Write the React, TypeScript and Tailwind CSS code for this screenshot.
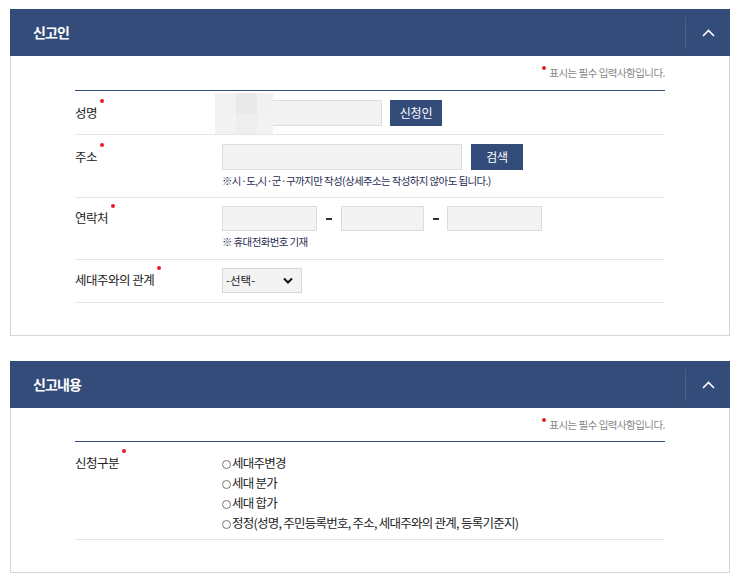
import React from 'react';

const NAVY = 'bg-[#344c79]';

const Dot = () => (
  <span className="absolute -right-[7px] -top-[4px] h-[4px] w-[4px] rounded-full bg-[#ee1c25]" />
);

const Label = ({ text }: { text: string }) => (
  <div className="w-[147px] shrink-0 text-[12.5px] tracking-[-0.04em] text-[#222]">
    <span className="relative">
      {text}
      <Dot />
    </span>
  </div>
);

const Header = ({ title }: { title: string }) => (
  <div className={`flex h-[47px] items-center ${NAVY}`}>
    <h2 className="flex-1 pl-[23px] text-[14px] font-bold tracking-[-0.06em] text-white">{title}</h2>
    <div className="h-[32px] w-px bg-[#4b5f88]" />
    <button className="flex h-full w-[44px] items-center justify-center">
      <svg width="13" height="8" viewBox="0 0 13 8" fill="none">
        <path d="M1 7 L6.5 1.5 L12 7" stroke="white" strokeWidth="1.6" />
      </svg>
    </button>
  </div>
);

const Required = ({ h = 'h-[34px]' }: { h?: string }) => (
  <div className={`flex ${h} items-center justify-end`}>
    <span className="relative pl-[6px] text-[10.5px] tracking-[-0.05em] text-[#888]">
      <span className="absolute -left-[1px] top-[1px] h-[4px] w-[4px] rounded-full bg-[#ee1c25]" />
      표시는 필수 입력사항입니다.
    </span>
  </div>
);

const Input = ({ w, h = 'h-[26px]' }: { w: string; h?: string }) => (
  <div className={`${h} ${w} border border-[#dcdcdc] bg-[#f3f3f3]`} />
);

const Btn = ({ text, w }: { text: string; w: string }) => (
  <button className={`h-[26px] ${w} ${NAVY} text-[12px] tracking-[-0.02em] text-white`}>{text}</button>
);

const Note = ({ text }: { text: string }) => (
  <p className="mt-[4px] text-[10.5px] leading-[14px] tracking-[-0.06em] text-[#1f2c52]">{text}</p>
);

const Dash = ({ w }: { w: string }) => (
  <span className={`flex ${w} justify-center`}>
    <span className="h-[2px] w-[6px] bg-[#333]" />
  </span>
);

export default function App() {
  const font = { fontFamily: '"Noto Sans CJK KR", "Noto Sans", sans-serif' };
  return (
    <div className="min-h-[580px] bg-white px-[10px] pt-[9px]" style={font}>
      {/* 신고인 */}
      <section className="mb-[25px] w-[720px]">
        <Header title="신고인" />
        <div className="border-x border-b border-[#d5d5d5] px-[64px] pb-[32px]">
          <Required />
          <div className="border-t border-[#344c79]">
            <div className="flex items-center border-b border-[#e6e6e6] pb-[8px] pt-[9px]">
              <Label text="성명" />
              <div className="relative flex gap-[8px]">
                <Input w="w-[160px]" />
                <Btn text="신청인" w="w-[52px]" />
                <div className="absolute -left-[7px] -top-[7px] grid grid-cols-[21px_21px_16px] grid-rows-[21px_20px]">
                  <div className="bg-[#f2f2f2]" />
                  <div className="bg-[#e9e9e9]" />
                  <div className="bg-[#f1f1f1]" />
                  <div className="bg-[#f3f3f3]" />
                  <div className="bg-[#eeeeee]" />
                  <div className="bg-[#f2f2f2]" />
                </div>
              </div>
            </div>
            <div className="flex items-start border-b border-[#e6e6e6] pb-[9px] pt-[9px]">
              <div className="flex h-[26px] items-center">
                <Label text="주소" />
              </div>
              <div>
                <div className="flex gap-[9px]">
                  <Input w="w-[240px]" />
                  <Btn text="검색" w="w-[52px]" />
                </div>
                <Note text="※시·도,시·군·구까지만 작성(상세주소는 작성하지 않아도 됩니다.)" />
              </div>
            </div>
            <div className="flex items-start border-b border-[#e6e6e6] pb-[10px] pt-[8px]">
              <div className="flex h-[25px] items-center">
                <Label text="연락처" />
              </div>
              <div>
                <div className="flex items-center">
                  <Input w="w-[95px]" h="h-[25px]" />
                  <Dash w="w-[24px]" />
                  <Input w="w-[83px]" h="h-[25px]" />
                  <Dash w="w-[23px]" />
                  <Input w="w-[95px]" h="h-[25px]" />
                </div>
                <Note text="※ 휴대전화번호 기재" />
              </div>
            </div>
            <div className="flex items-center border-b border-[#e6e6e6] pb-[9px] pt-[8px]">
              <Label text="세대주와의 관계" />
              <div className="flex h-[25px] w-[80px] items-center justify-between border border-[#d8d8d8] bg-[#f3f3f3] pl-[3px] pr-[8px] text-[11.5px] text-[#222]">
                <span>-선택-</span>
                <svg width="10" height="7" viewBox="0 0 10 7" fill="none">
                  <path d="M1 1.5 L5 5.5 L9 1.5" stroke="#111" strokeWidth="2" />
                </svg>
              </div>
            </div>
          </div>
        </div>
      </section>

      {/* 신고내용 */}
      <section className="w-[720px]">
        <Header title="신고내용" />
        <div className="border-x border-b border-[#d5d5d5] px-[64px] pb-[32px]">
          <Required h="h-[33px]" />
          <div className="border-t border-[#344c79]">
            <div className="flex items-start border-b border-[#e6e6e6] pb-[6px] pt-[11px]">
              <div className="flex h-[20px] items-center">
                <Label text="신청구분" />
              </div>
              <div className="flex flex-col">
                {['세대주변경', '세대 분가', '세대 합가', '정정(성명, 주민등록번호, 주소, 세대주와의 관계, 등록기준지)'].map((t) => (
                  <label key={t} className="flex h-[20px] items-center text-[12.5px] tracking-[-0.06em] text-[#222]">
                    <span className="mr-[1px] mt-[2px] h-[9px] w-[9px] rounded-full border border-[#777]" />
                    {t}
                  </label>
                ))}
              </div>
            </div>
          </div>
        </div>
      </section>
    </div>
  );
}
